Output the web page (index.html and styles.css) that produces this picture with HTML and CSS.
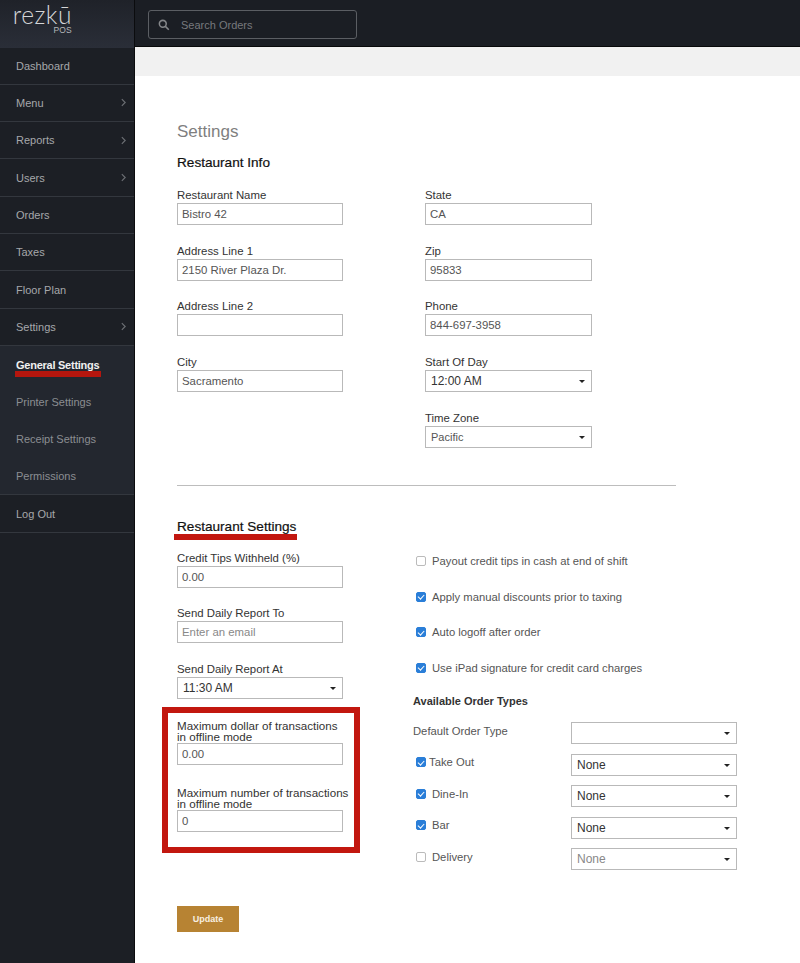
FILE: index.html
```html
<!DOCTYPE html>
<html lang="en">
<head>
<meta charset="utf-8">
<title>Settings</title>
<link rel="stylesheet" href="styles.css">
</head>
<body>
<div class="app">
  <aside class="sidebar">
    <div class="logo"><span class="logo-word">rezkū</span><span class="logo-sub">POS</span></div>
    <nav class="nav">
      <a class="nav-item">Dashboard</a>
      <a class="nav-item has-sub">Menu<svg class="chev" viewBox="0 0 6 10"><path d="M1 1l4 4-4 4"/></svg></a>
      <a class="nav-item has-sub">Reports<svg class="chev" viewBox="0 0 6 10"><path d="M1 1l4 4-4 4"/></svg></a>
      <a class="nav-item has-sub">Users<svg class="chev" viewBox="0 0 6 10"><path d="M1 1l4 4-4 4"/></svg></a>
      <a class="nav-item">Orders</a>
      <a class="nav-item">Taxes</a>
      <a class="nav-item">Floor Plan</a>
      <a class="nav-item has-sub">Settings<svg class="chev" viewBox="0 0 6 10"><path d="M1 1l4 4-4 4"/></svg></a>
      <a class="nav-item sub active">General Settings<span class="nav-mark"></span></a>
      <a class="nav-item sub">Printer Settings</a>
      <a class="nav-item sub">Receipt Settings</a>
      <a class="nav-item sub last">Permissions</a>
      <a class="nav-item">Log Out</a>
    </nav>
  </aside>
  <div class="body">
    <header class="topbar">
      <div class="search">
        <svg class="search-icon" viewBox="0 0 14 14"><circle cx="5.6" cy="5.6" r="4"/><path d="M8.6 8.6l4 4"/></svg>
        <span>Search Orders</span>
      </div>
    </header>
    <div class="strip"></div>
    <main class="main">
      <h1 class="title">Settings</h1>
      <h2 class="section">Restaurant Info</h2>
      <div class="info">
        <div class="col">
          <div class="field"><label>Restaurant Name</label><input class="box" value="Bistro 42"></div>
          <div class="field"><label>Address Line 1</label><input class="box" value="2150 River Plaza Dr."></div>
          <div class="field"><label>Address Line 2</label><input class="box" value=""></div>
          <div class="field"><label>City</label><input class="box" value="Sacramento"></div>
        </div>
        <div class="col wide">
          <div class="field"><label>State</label><input class="box" value="CA"></div>
          <div class="field"><label>Zip</label><input class="box" value="95833"></div>
          <div class="field"><label>Phone</label><input class="box" value="844-697-3958"></div>
          <div class="field"><label>Start Of Day</label><div class="box sel">12:00 AM</div></div>
          <div class="field"><label>Time Zone</label><div class="box sel small">Pacific</div></div>
        </div>
      </div>
      <hr class="rule">
      <h2 class="section second"><span class="marked">Restaurant Settings</span></h2>
      <div class="settings">
        <div class="col-left">
          <div class="field"><label>Credit Tips Withheld (%)</label><input class="box" value="0.00"></div>
          <div class="field"><label>Send Daily Report To</label><input class="box" placeholder="Enter an email"></div>
          <div class="field"><label>Send Daily Report At</label><div class="box sel">11:30 AM</div></div>
          <div class="offline">
            <div class="field two"><label>Maximum dollar of transactions<br>in offline mode</label><input class="box" value="0.00"></div>
            <div class="field two"><label>Maximum number of transactions<br>in offline mode</label><input class="box" value="0"></div>
          </div>
        </div>
        <div class="col-right">
          <div class="checks">
            <label class="check"><input type="checkbox">Payout credit tips in cash at end of shift</label>
            <label class="check"><input type="checkbox" checked>Apply manual discounts prior to taxing</label>
            <label class="check"><input type="checkbox" checked>Auto logoff after order</label>
            <label class="check"><input type="checkbox" checked>Use iPad signature for credit card charges</label>
          </div>
          <h3 class="types-title">Available Order Types</h3>
          <div class="types">
            <div class="type"><span class="type-label plain">Default Order Type</span><div class="box sel"></div></div>
            <div class="type"><label class="check tight"><input type="checkbox" checked>Take Out</label><div class="box sel">None</div></div>
            <div class="type"><label class="check"><input type="checkbox" checked>Dine-In</label><div class="box sel">None</div></div>
            <div class="type"><label class="check"><input type="checkbox" checked>Bar</label><div class="box sel">None</div></div>
            <div class="type"><label class="check"><input type="checkbox">Delivery</label><div class="box sel off">None</div></div>
          </div>
        </div>
      </div>
      <button class="update">Update</button>
    </main>
  </div>
</div>
</body>
</html>
```

FILE: styles.css
```css
*, *::before, *::after { box-sizing: border-box; }
html, body { margin: 0; height: 963px; overflow: hidden; }
body { font-family: "Liberation Sans", Arial, sans-serif; font-size: 11px; color: #333; background: #fff; }
.app { display: flex; height: 963px; }

.sidebar { width: 135px; flex: none; background: #1c1f25; border-right: 1px solid #0b0c0e; }
.logo { height: 47.5px; background: linear-gradient(#1f2229, #2a2e38); display: flex; flex-direction: column; align-items: flex-end; padding: 4px 62px 0 0; color: #d5d6d8; }
.logo-word { font-family: Lato, sans-serif; font-weight: 300; font-size: 24.5px; line-height: 22px; letter-spacing: .5px; }
.logo-sub { font-size: 8.5px; line-height: 9px; color: #b5b7ba; letter-spacing: .2px; }
.nav { display: flex; flex-direction: column; }
.nav-item { height: 37.33px; display: flex; align-items: center; justify-content: space-between; padding: 0 8px 0 16px; color: #a6a8ab; border-bottom: 1px solid #33373e; position: relative; background: #1c1f25; }
.nav-item.sub { background: #23272f; border-bottom: 0; color: #8b8e92; }
.nav-item.sub.last { border-bottom: 1px solid #33373e; }
.nav-item.active { color: #f0f0f0; font-weight: bold; letter-spacing: -.25px; }
.nav-mark { position: absolute; left: 15px; top: 25px; width: 86px; height: 6px; background: #b5160e; }
.chev { width: 5px; height: 9px; fill: none; stroke: #6c6f74; stroke-width: 1.4; }

.body { flex: 1; display: flex; flex-direction: column; min-width: 0; }
.topbar { height: 47px; background: #1b1e24; border-bottom: 1px solid #08090a; padding: 10px 0 0 13px; }
.search { width: 209px; height: 29px; border: 1px solid #5b5e63; border-radius: 3px; display: flex; align-items: center; padding-left: 9px; gap: 11px; color: #77797d; font-size: 11px; }
.search-icon { width: 12px; height: 12px; fill: none; stroke: #85878a; stroke-width: 1.8; }
.strip { height: 29px; background: #f1f1f1; }
.main { flex: 1; padding: 0 0 0 42px; }

.title { margin: 45px 0 0; font-size: 17px; font-weight: normal; line-height: 22px; color: #7f7f7f; }
.section { margin: 12px 0 0; font-size: 13.6px; font-weight: normal; line-height: 16px; color: #111; -webkit-text-stroke: .2px #111; }
.info { display: flex; gap: 81px; margin-top: 19px; }
.col { width: 167px; display: flex; flex-direction: column; gap: 20.67px; }
.col.wide .box { width: 167px; }
.field { display: flex; flex-direction: column; }
.field label { font-size: 11.4px; line-height: 11px; height: 12px; margin-bottom: 1px; color: #333; white-space: nowrap; }
.box { width: 166px; height: 22px; border: 1px solid #b9b9b9; background: #fff; font: inherit; font-size: 11.4px; color: #555; padding: 0 4px; display: block; border-radius: 0; outline: 0; }
.box::placeholder { color: #888; }
.sel { position: relative; font-size: 12px; color: #333; line-height: 21px; padding-left: 5px; }
.sel.small { font-size: 11px; color: #555; }
.sel.off { color: #888; }
.sel::after { content: ""; position: absolute; right: 6px; top: 9px; border: 3px solid transparent; border-top: 3px solid #222; border-bottom: 0; }

.rule { width: 499px; margin: 37px 0 0; border: 0; border-top: 1px solid #bdbdbd; }
.second { margin-top: 33px; }
.marked { position: relative; display: inline-block; }
.marked::after { content: ""; position: absolute; left: -3px; right: -1px; bottom: -5px; height: 6px; background: #c2170f; }

.settings { display: flex; margin-top: 18px; }
.col-left { width: 236px; display: flex; flex-direction: column; gap: 20.67px; }
.offline { position: relative; display: flex; flex-direction: column; gap: 22px; }
.offline::after { content: ""; position: absolute; left: -15px; top: -13px; width: 198px; height: 146px; border: 6px solid #c2170f; pointer-events: none; }
.field.two label { font-size: 11.6px; height: auto; line-height: 11px; margin-bottom: 1px; color: #333; }

.col-right { flex: 1; }
.checks { display: flex; flex-direction: column; gap: 22.6px; margin-top: 2px; }
.check { display: flex; align-items: center; height: 13px; padding-left: 3px; color: #555; font-size: 11.25px; }
.check input { appearance: none; width: 10px; height: 10px; margin: 0 6px 0 0; flex: none; border: 1px solid #bbb; border-radius: 2px; background: #fff; position: relative; }
.check input:checked { background: #2a7ed8; border-color: #2a7ed8; }
.check input:checked::after { content: ""; position: absolute; left: 2.2px; top: .2px; width: 3.6px; height: 6.4px; border: solid #fff; border-width: 0 1.4px 1.4px 0; transform: rotate(42deg); }
.check.tight input { margin-right: 3px; }
.types-title { margin: 21px 0 0; font-size: 11px; line-height: 13px; font-weight: bold; color: #333; }
.types { display: flex; flex-direction: column; gap: 9.5px; margin-top: 14px; }
.type { display: flex; align-items: flex-start; height: 22px; position: relative; }
.type .check, .type-label { width: 158px; flex: none; }
.type .check { height: 17px; }
.type-label { color: #555; line-height: 18px; font-size: 11.25px; }

.update { display: block; width: 62px; height: 26px; margin-top: 36px; border: 0; background: #b78333; color: #f7efe0; font: inherit; font-size: 9px; font-weight: bold; padding: 0; }
```
